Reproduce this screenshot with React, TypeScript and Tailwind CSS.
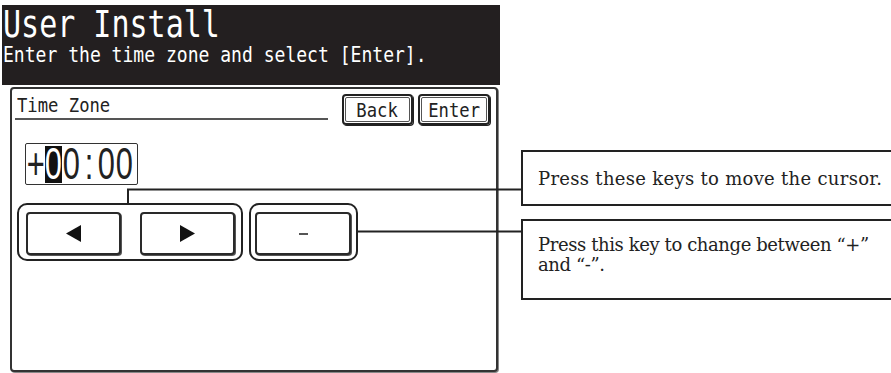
import React from "react";

const lcd = { fontFamily: '"DejaVu Sans Mono", "Liberation Mono", monospace' };
const digits = { fontFamily: '"Liberation Sans", Arial, sans-serif' };
const serif = { fontFamily: '"DejaVu Serif", "Liberation Serif", serif' };

function KeyButton({ children, w }: { children: React.ReactNode; w: string }) {
  return (
    <div className={`${w} h-[43px] rounded-[4px] border-2 border-[#2a2a2a] bg-white shadow-[1px_1px_0_#555] flex items-center justify-center`}>
      {children}
    </div>
  );
}

function SmallBtn({ label, w }: { label: string; w: string }) {
  return (
    <div className={`${w} h-[31px] rounded-[4px] border-2 border-[#222] p-[1px] shadow-[1px_1px_0_#222]`}>
      <div className="w-full h-full rounded-[2px] border border-[#555] flex items-center justify-center">
        <span className="inline-block text-[20px] leading-none text-[#222] scale-x-[0.86]" style={lcd}>
          {label}
        </span>
      </div>
    </div>
  );
}

export default function App() {
  const chars = ["+", "0", "0", ":", "0", "0"];
  return (
    <div className="relative w-[891px] h-[373px] bg-white overflow-hidden">
      <div className="flex">
        {/* LCD screen */}
        <div className="w-[500px] pt-[5px]">
          <div className="ml-[2px] w-[498px] h-[80px] bg-[#231f20] text-white pl-[1px]">
            <div className="w-max text-[38px] leading-[38px] whitespace-nowrap origin-left scale-x-[0.79]" style={lcd}>
              User Install
            </div>
            <div className="w-max mt-[1px] text-[22px] leading-[22px] whitespace-nowrap origin-left scale-x-[0.82]" style={lcd}>
              Enter the time zone and select [Enter].
            </div>
          </div>
          <div className="ml-[10px] mt-[2px] w-[488px] h-[285px] rounded-[4px] border-2 border-[#333] shadow-[1px_1px_0_#888] bg-white">
            {/* top row */}
            <div className="flex h-[37px]">
              <div className="ml-[3px] w-[313px] h-[31px] border-b-2 border-[#555] pl-[2px] pt-[6px]">
                <div className="w-max text-[20px] leading-[20px] whitespace-nowrap origin-left scale-x-[0.86] text-[#222]" style={lcd}>
                  Time Zone
                </div>
              </div>
              <div className="ml-[14px] mt-[5px] flex gap-[5px]">
                <SmallBtn label="Back" w="w-[71px]" />
                <SmallBtn label="Enter" w="w-[72px]" />
              </div>
            </div>
            {/* value */}
            <div className="ml-[13px] mt-[17px] w-[113px] h-[42px] border border-[#333] rounded-[2px] flex items-center pl-[1px]">
              {chars.map((c, i) => (
                <div
                  key={i}
                  className={`w-[17.7px] h-[37px] flex items-center justify-center ${i === 1 ? "bg-[#111] text-white" : "text-[#222]"}`}
                >
                  <span className="inline-block text-[44px] leading-none scale-x-[0.7]" style={digits}>
                    {c}
                  </span>
                </div>
              ))}
            </div>
            {/* key groups */}
            <div className="ml-[5px] mt-[18px] flex gap-[6px]">
              <div className="w-[226px] h-[58px] rounded-[10px] border-2 border-[#222] pl-[7px] pt-[7px] flex gap-[19px]">
                <KeyButton w="w-[95px]">
                  <svg width="15" height="17" viewBox="0 0 15 17">
                    <polygon points="0,8.5 15,0 15,17" fill="#111" />
                  </svg>
                </KeyButton>
                <KeyButton w="w-[95px]">
                  <svg width="15" height="17" viewBox="0 0 15 17">
                    <polygon points="15,8.5 0,0 0,17" fill="#111" />
                  </svg>
                </KeyButton>
              </div>
              <div className="w-[109px] h-[58px] rounded-[10px] border-2 border-[#222] pl-[4px] pt-[7px]">
                <KeyButton w="w-[96px]">
                  <div className="w-[9px] h-[2px] bg-[#555]" />
                </KeyButton>
              </div>
            </div>
          </div>
        </div>
        {/* callouts */}
        <div className="ml-[21px] pt-[150px] flex flex-col gap-[13px] text-[#222]" style={serif}>
          <div className="w-[380px] h-[56px] border-2 border-[#222] flex items-center pl-[15px] text-[18px] tracking-[0.3px] whitespace-nowrap">
            Press these keys to move the cursor.
          </div>
          <div className="w-[380px] h-[81px] border-2 border-[#222] pl-[15px] pt-[14px] text-[18px] leading-[20px] tracking-[-0.4px] whitespace-nowrap">
            Press this key to change between “+”
            <br />
            and “-”.
          </div>
        </div>
      </div>
      {/* leader lines */}
      <svg className="absolute left-0 top-0 pointer-events-none" width="891" height="373">
        <polyline points="128,203 128,189.5 522,189.5" fill="none" stroke="#222" strokeWidth="2" />
        <line x1="358" y1="231.5" x2="522" y2="231.5" stroke="#222" strokeWidth="2" />
      </svg>
    </div>
  );
}
